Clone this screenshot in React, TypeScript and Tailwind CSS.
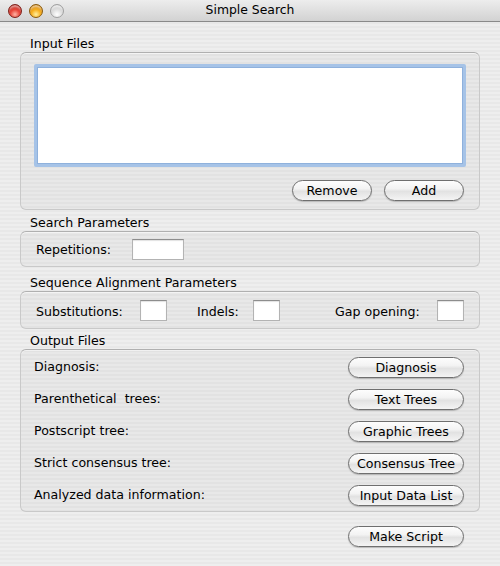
import React from 'react';

const font = { fontFamily: '"DejaVu Sans", "Liberation Sans", sans-serif' };

const AquaButton: React.FC<{ label: string; className?: string }> = ({ label, className = '' }) => (
  <button
    className={`h-[21px] rounded-full border border-[#6f6f6f] bg-[linear-gradient(to_bottom,#fdfdfd_0%,#f3f3f3_40%,#e2e2e2_55%,#f4f4f4_100%)] text-[12.6px] leading-[19px] text-black shadow-[0_1px_1px_rgba(0,0,0,0.2)] ${className}`}
  >
    {label}
  </button>
);

const Field: React.FC<{ className?: string }> = ({ className = '' }) => (
  <div className={`h-[21px] border border-[#b3b3b3] border-t-[#8d8d8d] bg-white shadow-[inset_0_1px_1px_rgba(0,0,0,0.12)] ${className}`} />
);

const GroupLabel: React.FC<{ text: string; className?: string }> = ({ text, className = '' }) => (
  <div className={`h-4 pl-[30px] text-[12.6px] leading-4 text-black ${className}`}>{text}</div>
);

const Box: React.FC<{ className?: string; children: React.ReactNode }> = ({ className = '', children }) => (
  <div
    className={`mx-5 rounded-[6px] border border-[#c9c9c9] border-t-[#b0b0b0] bg-black/[0.025] shadow-[inset_0_1px_0_rgba(255,255,255,0.5)] ${className}`}
  >
    {children}
  </div>
);

const outputRows = [
  { label: 'Diagnosis:', button: 'Diagnosis' },
  { label: 'Parenthetical  trees:', button: 'Text Trees' },
  { label: 'Postscript tree:', button: 'Graphic Trees' },
  { label: 'Strict consensus tree:', button: 'Consensus Tree' },
  { label: 'Analyzed data information:', button: 'Input Data List' },
];

export default function App() {
  return (
    <div
      style={font}
      className="flex h-[566px] w-[500px] flex-col overflow-hidden bg-[repeating-linear-gradient(to_bottom,#eeeeee_0px,#eeeeee_2px,#e8e8e8_2px,#e8e8e8_4px)]"
    >
      {/* title bar */}
      <div className="relative flex h-[22px] shrink-0 items-center border-b border-[#8a8a8a] bg-[linear-gradient(to_bottom,#ededed,#d2d2d2)]">
        <div className="flex gap-[7px] pl-2">
          <span className="h-[14px] w-[14px] rounded-full border border-[#7d2019] bg-[radial-gradient(circle_at_50%_78%,#ffb4a4_0%,#e8463a_42%,#a11a12_100%)] shadow-[inset_0_3px_2px_-1px_rgba(255,255,255,0.55)]" />
          <span className="h-[14px] w-[14px] rounded-full border border-[#8a5a0c] bg-[radial-gradient(circle_at_50%_78%,#fff0a0_0%,#f7b020_42%,#b86c0c_100%)] shadow-[inset_0_3px_2px_-1px_rgba(255,255,255,0.55)]" />
          <span className="h-[14px] w-[14px] rounded-full border border-[#a0a0a0] bg-[radial-gradient(circle_at_50%_78%,#ffffff_0%,#dedede_45%,#b5b5b5_100%)] shadow-[inset_0_3px_2px_-1px_rgba(255,255,255,0.7)]" />
        </div>
        <div className="absolute inset-0 flex items-center justify-center text-[12.4px] text-black">Simple Search</div>
      </div>

      {/* Input Files */}
      <GroupLabel text="Input Files" className="mt-[14px]" />
      <Box className="h-[158px] pl-[13px] pr-[13px] pt-[11px]">
        <div className="h-[103px] rounded-[2px] border-[3px] border-[#a6c3e7] bg-white shadow-[inset_0_0_0_1px_#8fb1dc]" />
        <div className="mt-[13px] flex justify-end gap-[12px] pr-[2px]">
          <AquaButton label="Remove" className="w-[80px]" />
          <AquaButton label="Add" className="w-[80px]" />
        </div>
      </Box>

      {/* Search Parameters */}
      <GroupLabel text="Search Parameters" className="mt-[5px]" />
      <Box className="flex h-[36px] items-center pl-[15px]">
        <span className="w-[96px] pt-[3px] text-[12.6px] text-black">Repetitions:</span>
        <Field className="w-[52px]" />
      </Box>

      {/* Sequence Alignment Parameters */}
      <GroupLabel text="Sequence Alignment Parameters" className="mt-[8px]" />
      <Box className="flex h-[38px] items-center pl-[15px]">
        <span className="w-[104px] pt-[4px] text-[12.6px] text-black">Substitutions:</span>
        <Field className="w-[27px]" />
        <span className="ml-[30px] w-[56px] pt-[4px] text-[12.6px] text-black">Indels:</span>
        <Field className="w-[27px]" />
        <span className="ml-[55px] w-[102px] pt-[4px] text-[12.6px] text-black">Gap opening:</span>
        <Field className="w-[27px]" />
      </Box>

      {/* Output Files */}
      <GroupLabel text="Output Files" className="mt-[4px]" />
      <Box className="flex h-[163px] flex-col gap-[11px] pl-[13px] pr-[15px] pt-[7px]">
        {outputRows.map((row) => (
          <div key={row.button} className="flex h-[21px] items-center justify-between">
            <span className="whitespace-pre text-[12.6px] text-black">{row.label}</span>
            <AquaButton label={row.button} className="w-[116px]" />
          </div>
        ))}
      </Box>

      <div className="mt-[14px] flex justify-end pr-[36px]">
        <AquaButton label="Make Script" className="w-[116px]" />
      </div>
    </div>
  );
}
